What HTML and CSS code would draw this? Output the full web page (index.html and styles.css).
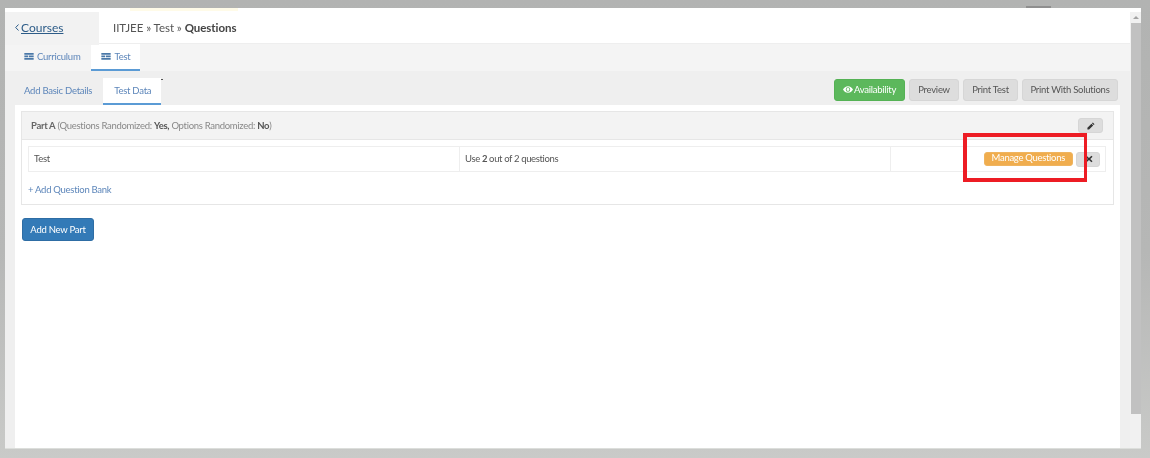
FILE: index.html
```html
<!DOCTYPE html>
<html lang="en">
<head>
<meta charset="utf-8">
<title>Questions</title>
<link rel="stylesheet" href="styles.css">
</head>
<body>
<div class="screen">
  <span class="peek-yellow"></span>
  <span class="peek-gray"></span>
  <div class="window">
    <div class="main">
      <header class="topbar">
        <a class="back"><svg class="chev" viewBox="0 0 4 7"><path d="M3.500.5L.7 3.500l2.800 3"/></svg><span class="back-link">Courses</span></a>
        <div class="crumbs">IITJEE » Test » <b>Questions</b></div>
      </header>
      <nav class="tabs">
        <a class="tab tab-first"><svg class="tab-icon" viewBox="0 0 12 9"><path d="M0 0h12v2.400H0zM0 3.200h5v2.400H0zM6 3.200h6v2.400H6zM0 6.400h12v2.400H0z"/></svg>Curriculum</a>
        <a class="tab active"><svg class="tab-icon" viewBox="0 0 12 9"><path d="M0 0h12v2.400H0zM0 3.200h5v2.400H0zM6 3.200h6v2.400H6zM0 6.400h12v2.400H0z"/></svg>Test</a>
      </nav>
      <div class="subbar">
        <div class="subtabs">
          <a class="subtab">Add Basic Details</a>
          <a class="subtab active">Test Data<span class="speck"></span></a>
        </div>
        <div class="actions">
          <button class="btn btn-green"><svg class="eye" viewBox="0 0 12 8"><path fill-rule="evenodd" d="M6 0c2.600 0 4.800 1.700 6 4-1.200 2.300-3.400 4-6 4S1.200 6.300 0 4c1.200-2.300 3.400-4 6-4zm0 1.300a2.700 2.700 0 1 0 0 5.400 2.700 2.700 0 0 0 0-5.400zm0 1a1.700 1.700 0 1 1 0 3.400 1.700 1.700 0 0 1 0-3.400z"/></svg>Availability</button>
          <button class="btn btn-preview">Preview</button>
          <button class="btn btn-print">Print Test</button>
          <button class="btn btn-solutions">Print With Solutions</button>
        </div>
      </div>
      <div class="content">
        <section class="panel">
          <div class="panel-head">
            <div class="panel-title"><strong>Part A</strong> (Questions Randomized: <b>Yes,</b> Options Randomized: <b>No</b>)</div>
            <button class="mini mini-edit"><svg viewBox="0 0 10 10" class="ico"><path d="M7.300.6l2.100 2.100-1.100 1.100-2.100-2.100zM5.600 2.300l2.100 2.100L2.600 9.400H.5V7.300z"/></svg></button>
          </div>
          <div class="panel-body">
            <div class="bank">
              <div class="cell cell-name">Test</div>
              <div class="cell cell-use">Use <b>2</b> out of 2 questions</div>
              <div class="cell cell-act">
                <button class="manage">Manage Questions</button>
                <button class="mini mini-x"><svg viewBox="0 0 10 10" class="ico"><path d="M2 .8L5 3.600 8 .8 9.400 2.200 6.500 5l2.900 2.800L8 9.200 5 6.400 2 9.200.6 7.800 3.500 5 .6 2.200z"/></svg></button>
                <span class="highlight"></span>
              </div>
            </div>
            <a class="add-bank">+ Add Question Bank</a>
          </div>
        </section>
        <button class="add-part">Add New Part</button>
      </div>
    </div>
    <div class="scrollbar">
      <span class="arrow"></span>
      <span class="thumb"></span>
    </div>
  </div>
</div>
</body>
</html>
```
FILE: styles.css
```css
* { box-sizing: border-box; }
html, body { margin: 0; height: 100%; overflow: hidden; }
body { font-family: Lato, "Noto Sans", sans-serif; font-size: 9.500px; letter-spacing: -0.25px; color: #555; }
.screen {
  position: relative;
  width: 1150px; height: 458px;
  padding: 8px 9px 9px 5px;
  background: linear-gradient(to bottom, #b2b3b2 0, #b6b7b6 55%, #c9cac8 100%);
}
.peek-yellow { position: absolute; left: 130px; top: 8px; width: 108px; height: 3px; background: #fffbe8; z-index: 1; }
.peek-gray { position: absolute; left: 1026px; top: 6px; width: 25px; height: 2px; background: #8f8f8f; }
.window {
  height: 100%; display: flex; background: #fff;
  border-bottom: 1px solid #dcdedb; padding-top: 4px;
  filter: blur(0.3px);
}
.main { flex: 1; min-width: 0; display: flex; flex-direction: column; background: #efefef; }
.topbar { display: flex; height: 32px; flex: none; border-bottom: 1px solid #eee; background: #fff; }
.back { width: 94px; height: 33px; flex: none; background: #f2f2f2; padding: 0 0 2px 10px; font-size: 12px; letter-spacing: 0; color: #2d5c88; display: flex; align-items: center; position: relative; z-index: 1; }
.chev { width: 4px; height: 7px; margin-right: 2px; fill: none; stroke: #2d5c88; stroke-width: 1; flex: none; }
.back-link { text-decoration: underline; }
.crumbs { padding-left: 14px; font-size: 11.500px; letter-spacing: -0.05px; color: #555; line-height: 31px; white-space: pre; }
.crumbs b { color: #444; }
.tabs { height: 27px; flex: none; background: #f4f4f4; display: flex; padding-left: 9px; }
.tab { display: flex; align-items: center; height: 26px; padding: 0 10px 1px; color: #5d86ba; }
.tab-first { padding-right: 11px; }
.tab.active { background: #fff; border-bottom: 2px solid #5b9bd5; height: 27px; padding-bottom: 0; }
.tab-icon { width: 10px; height: 7px; margin-right: 3px; fill: #4a78a8; flex: none; }
.subbar { height: 34px; flex: none; background: #efefef; display: flex; justify-content: space-between; padding: 7px 12px 0 9px; }
.subtabs { display: flex; }
.subtab { padding: 0 10px 2px; height: 27px; display: flex; align-items: center; color: #5d86ba; }
.subtab.active { background: #fff; border-bottom: 2px solid #5b9bd5; margin-left: 1px; padding: 0 10px 1px 11px; position: relative; }
.speck { position: absolute; right: -2px; top: 1px; width: 2px; height: 1px; background: #555; }
.actions { display: flex; gap: 4px; padding-top: 1px; }
.btn {
  height: 22px; padding: 0 0 1px; font: inherit; letter-spacing: inherit; color: #555;
  background: #ddd; border: 1px solid #d6d6d6; border-radius: 3px;
}
.btn-green { width: 71px; background: #5cb85c; border-color: #55b255; color: #fff; display: flex; align-items: center; justify-content: center; }
.btn-preview { width: 50px; }
.btn-print { width: 55px; }
.btn-solutions { width: 96px; }
.eye { width: 10px; height: 7px; fill: #fff; margin-right: 1px; flex: none; }
.content { flex: 1; margin: 0 10px; background: #fff; padding: 6px 6px 0 6px; }
.panel { border: 1px solid #e6e6e6; }
.panel-head { height: 28px; background: #f3f3f3; border-bottom: 1px solid #e6e6e6; display: flex; align-items: center; justify-content: space-between; padding: 0 10px 0 9px; }
.panel-title { color: #888; letter-spacing: -0.3px; padding-bottom: 1px; }
.panel-title strong { font-weight: 700; color: #666; }
.panel-title b { color: #555; }
.mini { border: 1px solid #d6d6d6; background: #ddd; border-radius: 3px; padding: 0; display: flex; align-items: center; justify-content: center; }
.mini-edit { width: 25px; height: 15px; }
.mini-x { width: 24px; height: 15px; padding-left: 1px; }
.ico { width: 8px; height: 8px; fill: #333; }
.panel-body { padding: 6px 7px 8px 6px; }
.bank { display: flex; height: 26px; border: 1px solid #eee; }
.cell { display: flex; align-items: center; color: #555; padding-bottom: 2px; }
.cell-name { width: 430px; padding-left: 5px; }
.cell-use { width: 432px; border-left: 1px solid #eee; border-right: 1px solid #eee; padding-left: 5px; white-space: pre; letter-spacing: -0.36px; }
.cell-act { flex: 1; justify-content: flex-end; gap: 3px; padding: 0 5px 0 0; position: relative; }
.manage { height: 14px; padding: 0 7px 1px; border: 1px solid #efb45f; border-radius: 3px; background: #f0ad4e; color: #fff; font: inherit; letter-spacing: -0.3px; line-height: 1; margin-bottom: 1px; }
.highlight { position: absolute; left: 72px; top: -14px; width: 124px; height: 49px; border: 4px solid #ed1c24; border-right-width: 3px; }
.add-bank { display: block; margin-top: 12px; color: #5d86ba; line-height: 12px; letter-spacing: -0.28px; }
.add-part { display: block; margin: 13px 0 0 1px; width: 72px; height: 23px; padding: 0 0 1px; background: #337ab7; border: 1px solid #2e6da4; border-radius: 3px; color: #fff; font: inherit; letter-spacing: inherit; }
.scrollbar { width: 11px; flex: none; background: #f1f1f1; display: flex; flex-direction: column; align-items: center; }
.arrow { margin-top: 4px; width: 0; height: 0; border-left: 3px solid transparent; border-right: 3px solid transparent; border-bottom: 3px solid #a3a3a3; }
.thumb { margin-top: 4px; width: 10px; height: 391px; background: #c1c1c1; }
```
